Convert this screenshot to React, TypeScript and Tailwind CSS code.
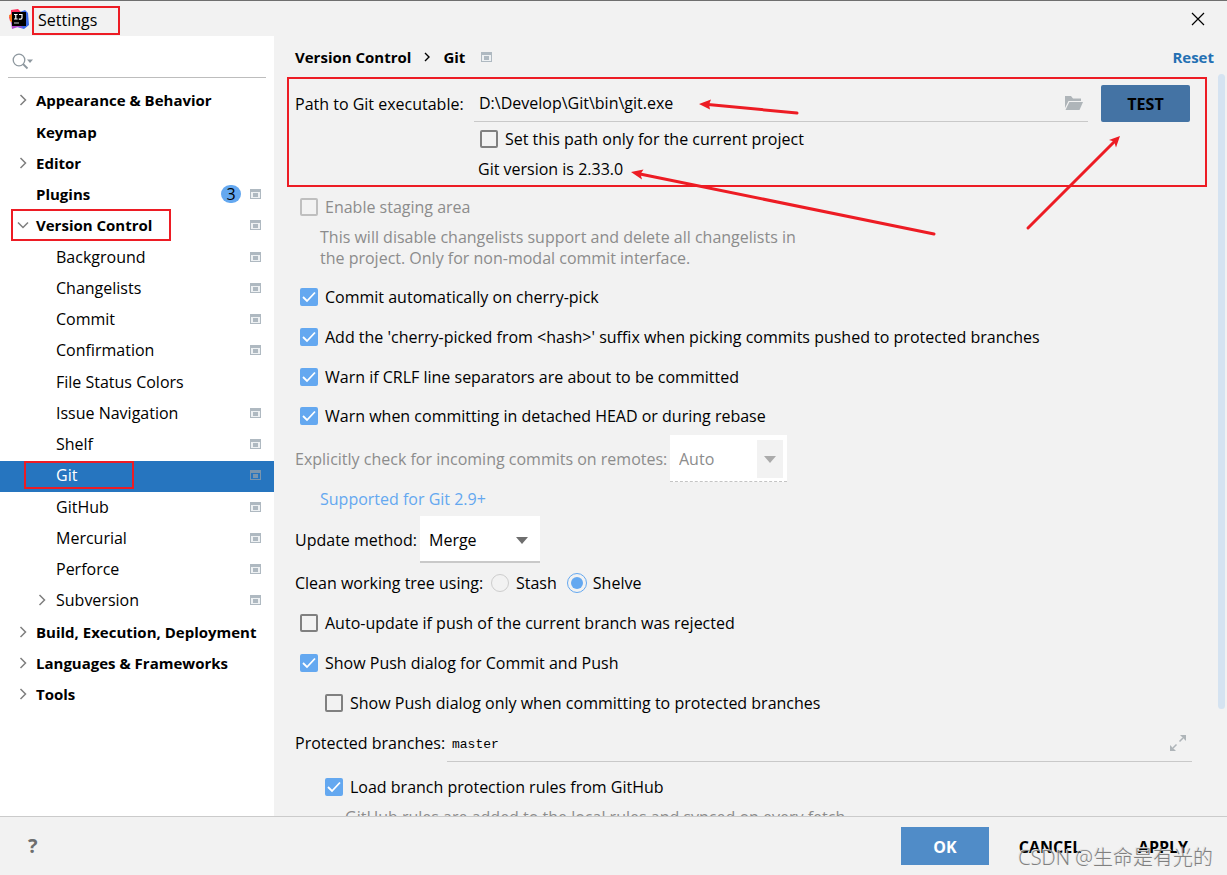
import React, { useState } from 'react';
import clsx from 'clsx';

interface TreeItem {
  label: string;
  level: 0 | 1;
  arrow?: 'right' | 'down';
  project?: boolean;
  badge?: number;
  marked?: boolean;
}

const treeItems: TreeItem[] = [
  { label: 'Appearance & Behavior', level: 0, arrow: 'right' },
  { label: 'Keymap', level: 0 },
  { label: 'Editor', level: 0, arrow: 'right' },
  { label: 'Plugins', level: 0, project: true, badge: 3 },
  { label: 'Version Control', level: 0, arrow: 'down', project: true, marked: true },
  { label: 'Background', level: 1, project: true },
  { label: 'Changelists', level: 1, project: true },
  { label: 'Commit', level: 1, project: true },
  { label: 'Confirmation', level: 1, project: true },
  { label: 'File Status Colors', level: 1 },
  { label: 'Issue Navigation', level: 1, project: true },
  { label: 'Shelf', level: 1, project: true },
  { label: 'Git', level: 1, project: true, marked: true },
  { label: 'GitHub', level: 1, project: true },
  { label: 'Mercurial', level: 1, project: true },
  { label: 'Perforce', level: 1, project: true },
  { label: 'Subversion', level: 1, arrow: 'right', project: true },
  { label: 'Build, Execution, Deployment', level: 0, arrow: 'right' },
  { label: 'Languages & Frameworks', level: 0, arrow: 'right' },
  { label: 'Tools', level: 0, arrow: 'right' }
];

function AppLogo() {
  return (
    <svg width="20" height="20" viewBox="0 0 20 20" aria-hidden="true">
      <path d="M2 1L9 0l5 5-6 8-7-1L0 8l2-3z" fill="#fe315d" />
      <path d="M0 6l4-1 3 8-5 1z" fill="#f97a12" />
      <path d="M11 3l5-2 3 3 1 12-5 4-7-2z" fill="#3b6be8" />
      <path d="M2 13l7 1 5 5-5-1-6 2z" fill="#b04bd0" />
      <rect x="3" y="3" width="14" height="14" fill="#000" />
      <path d="M5 5.500h3.600M6.800 5.500v4.500M5 10h3.600M10 5.500h3v3.200q0 1.400-1.400 1.400h-1.800" fill="none" stroke="#fff" strokeWidth="1.200" />
      <path d="M5 14h5" stroke="#ccc" strokeWidth="1" />
    </svg>
  );
}

function ProjectIcon({ selected }: { selected?: boolean }) {
  return (
    <svg width="11" height="10" viewBox="0 0 11 10" aria-hidden="true">
      <path d="M0 0h11v10H0z" fill={selected ? '#7995ae' : '#afb9c1'} />
      <path d="M1 3h9v6H1z" fill={selected ? '#2675bf' : '#eef1f3'} />
      <path d="M3 4h5v4H3z" fill={selected ? '#7995ae' : '#afb9c1'} />
    </svg>
  );
}

function TreeArrow({ direction }: { direction: 'right' | 'down' }) {
  return (
    <svg width="12" height="12" viewBox="0 0 12 12" fill="none" stroke="#7f7f7f" strokeWidth="1.5" aria-hidden="true">
      <path d={direction === 'right' ? 'M3.500 1l5 5-5 5' : 'M1 3.500l5 5 5-5'} />
    </svg>
  );
}

interface CheckProps {
  label: string;
  defaultChecked?: boolean;
  disabled?: boolean;
}

function Check({ label, defaultChecked, disabled }: CheckProps) {
  return (
    <label className={clsx('flex items-center gap-[7px]', disabled && 'text-[#8c8c8c]')}>
      <span className="grid size-[18px] shrink-0">
        <input
          type="checkbox"
          defaultChecked={defaultChecked}
          disabled={disabled}
          className="peer col-start-1 row-start-1 size-[18px] appearance-none rounded-xs border-2 border-[#808080] checked:border-[#64a8f0] checked:bg-[#64a8f0] disabled:border-[#bfbfbf]"
        />
        <svg
          className="pointer-events-none invisible col-start-1 row-start-1 peer-checked:visible"
          viewBox="0 0 18 18"
          fill="none"
          stroke="#fff"
          strokeWidth="1.8"
        >
          <path d="M3 9l4 4 8-8.500" />
        </svg>
      </span>
      {label}
    </label>
  );
}

interface RadioProps {
  label: string;
  value: string;
  selected: string;
  onSelect: (value: string) => void;
}

function Radio({ label, value, selected, onSelect }: RadioProps) {
  return (
    <label className="flex items-center gap-1.5">
      <span className="grid size-5 place-items-center">
        <input
          type="radio"
          name="clean-tree"
          value={value}
          checked={selected === value}
          onChange={() => onSelect(value)}
          className="peer col-start-1 row-start-1 size-[18px] appearance-none rounded-full border border-[#cdcdcd] checked:size-5 checked:border-[#64a8f0]"
        />
        <span className="pointer-events-none invisible col-start-1 row-start-1 size-3 rounded-full bg-[#64a8f0] peer-checked:visible" />
      </span>
      {label}
    </label>
  );
}

function Sidebar() {
  const [selected, setSelected] = useState('Git');

  return (
    <aside className="flex w-[274px] shrink-0 flex-col bg-white">
      <div className="mx-2 flex h-[42px] items-center gap-1 border-b border-[#bdbdbd] pt-2 pl-1">
        <svg width="22" height="18" viewBox="0 0 22 18" aria-hidden="true">
          <circle cx="7" cy="8" r="5.800" fill="none" stroke="#8e989f" strokeWidth="1.300" />
          <path d="M11 12l4.500 4.500" stroke="#8e989f" strokeWidth="1.800" />
          <path d="M15 7.500h6l-3 3.500z" fill="#8e989f" />
        </svg>
        <input type="text" aria-label="Search settings" className="min-w-0 flex-1 bg-transparent outline-none" />
      </div>
      <ul className="mt-2 flex flex-col">
        {treeItems.map((item) => {
          const isSelected = item.label === selected;
          return (
            <li key={item.label} className="nth-[4n+2]:mt-px">
              <button
                onClick={() => setSelected(item.label)}
                className={clsx(
                  'flex h-[31px] w-full items-center pr-[13px] pb-[3px] text-left whitespace-nowrap',
                  isSelected && 'bg-[#2675bf] text-white'
                )}
              >
                <span
                  className={clsx(
                    'flex items-center',
                    item.level === 0 && 'ml-[11px] pl-1.5 text-[15px] font-bold',
                    item.level === 1 && 'ml-6 pl-3',
                    item.marked && 'relative'
                  )}
                >
                  <span className={clsx('shrink-0', item.level === 0 ? 'w-[19px]' : 'w-5')}>
                    {item.arrow && <TreeArrow direction={item.arrow} />}
                  </span>
                  {item.label}
                  {item.marked && (
                    <span
                      className={clsx(
                        'absolute left-0 border-2 border-[#ed1c24]',
                        item.level === 0 ? '-inset-y-1 w-40' : '-inset-y-0.5 w-[110px]'
                      )}
                    />
                  )}
                </span>
                <span className="ml-auto flex items-center gap-[9px]">
                  {item.badge && (
                    <span className="grid h-[18px] w-5 place-items-center rounded-full bg-[#64a8f0] leading-[18px]">
                      {item.badge}
                    </span>
                  )}
                  {item.project && <ProjectIcon selected={isSelected} />}
                </span>
              </button>
            </li>
          );
        })}
      </ul>
    </aside>
  );
}

function Arrows() {
  return (
    <svg
      className="pointer-events-none absolute top-[58px] left-[346px]"
      width="510"
      height="150"
      viewBox="620 94 510 150"
      fill="#ed1c24"
      stroke="#ed1c24"
      aria-hidden="true"
    >
      <g strokeWidth="3" strokeLinecap="round">
        <path d="M708 104.500L797 113" />
        <path d="M640 174L934 234" />
        <path d="M1028 228L1114 142" />
      </g>
      <g stroke="none">
        <path d="M699 104l12-4.500-2 5 1 5z" />
        <path d="M631 172l12.500-2.500-3 4.500 1.500 5.500z" />
        <path d="M1120 136l-11 4 5 1.500 2 6z" />
      </g>
    </svg>
  );
}

function GitPanel() {
  const [cleanTree, setCleanTree] = useState('shelve');

  return (
    <main className="relative flex min-w-0 flex-1 flex-col overflow-hidden">
      <header className="flex h-[41px] shrink-0 items-center pr-[13px] pl-[21px] text-[15px] font-bold">
        <span>Version Control</span>
        <svg className="mx-3" width="8" height="10" viewBox="0 0 8 10" fill="none" stroke="#000" strokeWidth="1.400" aria-hidden="true">
          <path d="M2 1l4 4-4 4" />
        </svg>
        <span className="mr-4">Git</span>
        <ProjectIcon />
        <a href="#reset" className="ml-auto text-[#2470b3]">Reset</a>
      </header>

      <section className="mr-5 ml-[13px] grid grid-cols-[179px_1fr] border-2 border-[#ed1c24] pt-1.5 pr-[15px] pb-0.5 pl-1.5">
        <label htmlFor="git-path" className="self-center">Path to Git executable:</label>
        <div className="flex gap-[13px] pb-px">
          <div className="flex h-[37px] flex-1 items-center border-b border-[#c9c9c9] pr-1 pl-[5px]">
            <input
              id="git-path"
              type="text"
              defaultValue="D:\Develop\Git\bin\git.exe"
              className="min-w-0 flex-1 bg-transparent outline-none"
            />
            <button aria-label="Browse">
              <svg width="20" height="16" viewBox="0 0 20 16" fill="#afb5b9">
                <path d="M1 1h6l2 2.500h8V6H4.500L1 13z" />
                <path d="M5.300 7H19l-3.500 8H1.500z" />
              </svg>
            </button>
          </div>
          <button className="h-[37px] w-[89px] rounded-xs bg-[#4473a4] font-bold">TEST</button>
        </div>
        <div className="col-start-2 flex h-8 items-center pl-1.5">
          <Check label="Set this path only for the current project" />
        </div>
        <p className="col-start-2 flex h-7 items-center pl-1">Git version is 2.33.0</p>
      </section>

      <div className="flex flex-col pr-[35px] pl-[21px]">
        <div className="flex h-10 items-center pl-[5px]">
          <Check label="Enable staging area" disabled />
        </div>
        <p className="pl-[25px] leading-[21px] text-[#8c8c8c]">
          This will disable changelists support and delete all changelists in<br />
          the project. Only for non-modal commit interface.
        </p>
        <div className="flex flex-col pt-2 pl-[5px]">
          <div className="flex h-10 items-center">
            <Check label="Commit automatically on cherry-pick" defaultChecked />
          </div>
          <div className="flex h-10 items-center">
            <Check
              label="Add the 'cherry-picked from <hash>' suffix when picking commits pushed to protected branches"
              defaultChecked
            />
          </div>
          <div className="flex h-10 items-center">
            <Check label="Warn if CRLF line separators are about to be committed" defaultChecked />
          </div>
          <div className="flex h-[38px] items-center">
            <Check label="Warn when committing in detached HEAD or during rebase" defaultChecked />
          </div>
        </div>

        <div className="flex h-[47px] items-center text-[#8c8c8c]">
          <label htmlFor="incoming" className="w-[375px]">Explicitly check for incoming commits on remotes:</label>
          <div className="relative">
            <select
              id="incoming"
              disabled
              className="block h-[47px] w-[117px] appearance-none border-b border-dashed border-[#c4c4c4] bg-white pt-0.5 pl-[9px] opacity-100"
            >
              <option>Auto</option>
            </select>
            <span className="pointer-events-none absolute top-[5px] right-1 grid h-[38px] w-[26px] place-items-center bg-[#f2f2f2]">
              <svg width="12" height="7" viewBox="0 0 12 7" fill="#ababab" aria-hidden="true">
                <path d="M0 0h12L6 7z" />
              </svg>
            </span>
          </div>
        </div>
        <p className="flex h-[34px] items-center pl-[25px] text-[#64a8f0]">Supported for Git 2.9+</p>

        <div className="flex h-[47px] items-center">
          <label htmlFor="update-method" className="w-[125px]">Update method:</label>
          <div className="relative">
            <select
              id="update-method"
              className="block h-[47px] w-[120px] appearance-none border-b-2 border-[#c9c9c9] bg-white pt-0.5 pl-[9px]"
            >
              <option>Merge</option>
              <option>Rebase</option>
            </select>
            <svg
              className="pointer-events-none absolute top-[21px] right-3"
              width="12"
              height="7"
              viewBox="0 0 12 7"
              fill="#6e6e6e"
              aria-hidden="true"
            >
              <path d="M0 0h12L6 7z" />
            </svg>
          </div>
        </div>

        <div className="flex h-10 items-center">
          <span className="w-[195px]">Clean working tree using:</span>
          <div className="flex gap-2.5">
            <Radio label="Stash" value="stash" selected={cleanTree} onSelect={setCleanTree} />
            <Radio label="Shelve" value="shelve" selected={cleanTree} onSelect={setCleanTree} />
          </div>
        </div>
        <div className="flex h-10 items-center pl-[5px]">
          <Check label="Auto-update if push of the current branch was rejected" />
        </div>
        <div className="flex h-10 items-center pl-[5px]">
          <Check label="Show Push dialog for Commit and Push" defaultChecked />
        </div>
        <div className="flex h-10 items-center pl-[30px]">
          <Check label="Show Push dialog only when committing to protected branches" />
        </div>

        <div className="flex h-10 items-center">
          <label htmlFor="branches" className="w-[152px]">Protected branches:</label>
          <div className="flex h-[38px] flex-1 items-center border-b border-[#c9c9c9] pr-1.5 pl-[5px]">
            <input
              id="branches"
              type="text"
              defaultValue="master"
              className="min-w-0 flex-1 bg-transparent pt-1 font-['Liberation_Mono',monospace] text-[13px] outline-none"
            />
            <button aria-label="Expand">
              <svg width="16" height="16" viewBox="0 0 16 16" fill="#afb5b9" stroke="#afb5b9">
                <path d="M10 0h6v6z" stroke="none" />
                <path d="M0 10v6h6z" stroke="none" />
                <path d="M9.500 6.500L13 3M6.500 9.500L3 13" strokeWidth="1.500" />
              </svg>
            </button>
          </div>
        </div>
        <div className="flex h-12 items-center pl-[30px]">
          <Check label="Load branch protection rules from GitHub" defaultChecked />
        </div>
        <p className="-mt-1 pl-[50px] leading-[21px] text-[#8c8c8c]">
          GitHub rules are added to the local rules and synced on every fetch
        </p>
      </div>

      <div className="absolute top-[38px] right-0.5 h-[635px] w-[7px] rounded-full bg-[#d5e3f1]" />
      <Arrows />
    </main>
  );
}

export default function App() {
  return (
    <div className="relative flex h-screen flex-col overflow-hidden border-t border-[#6f6f6f] bg-[#f2f2f2] font-['Open_Sans','Noto_Sans_CJK_SC',sans-serif] text-base leading-6 text-black">
      <div className="flex h-[35px] shrink-0 items-center pr-[22px] pl-[9px]">
        <AppLogo />
        <h1 className="mt-1 ml-[3px] flex h-[29px] w-[88px] items-center border-2 border-[#ed1c24] pb-0.5 pl-1">Settings</h1>
        <button aria-label="Close" className="ml-auto">
          <svg width="14" height="14" viewBox="0 0 14 14" stroke="#000" strokeWidth="1.200">
            <path d="M1 1l12 12M13 1L1 13" />
          </svg>
        </button>
      </div>

      <div className="flex min-h-0 flex-1">
        <Sidebar />
        <GitPanel />
      </div>

      <footer className="flex h-[59px] shrink-0 items-center border-t border-[#cbcbcb] pr-3 pl-7 font-bold">
        <button aria-label="Help" className="text-xl text-[#6e6e6e]">?</button>
        <div className="ml-auto flex items-center gap-3">
          <button className="h-[38px] w-[88px] bg-[#508cc8] pt-0.5 text-white">OK</button>
          <button className="h-[38px] w-[98px] pt-0.5">CANCEL</button>
          <button className="h-[38px] w-[104px] pt-0.5">APPLY</button>
        </div>
      </footer>

      <p className="pointer-events-none absolute right-3.5 bottom-[3px] text-xl font-light text-[#808080] text-shadow-[-1px_-1px_0_#e4e4e4]">
        CSDN @生命是有光的
      </p>
    </div>
  );
}
